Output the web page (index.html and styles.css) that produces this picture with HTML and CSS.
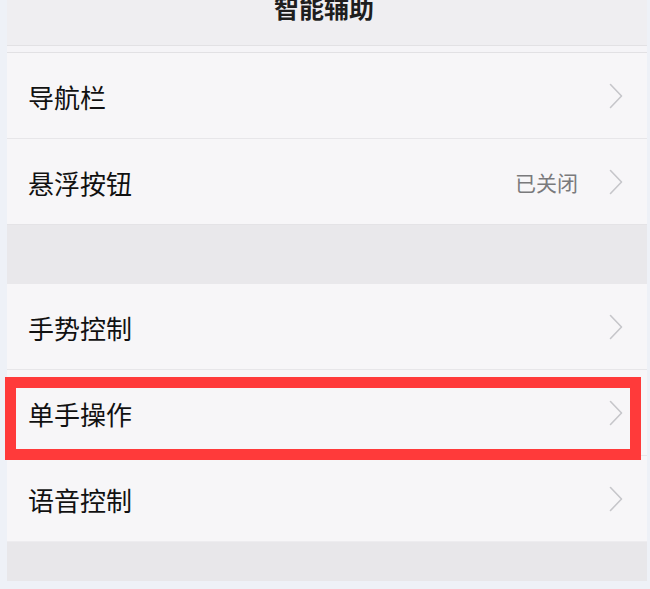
FILE: index.html
```html
<!DOCTYPE html>
<html lang="zh-CN">
<head>
<meta charset="utf-8">
<link rel="stylesheet" href="styles.css">
</head>
<body>
<div class="panel">
  <div class="header"><div class="title">智能辅助</div></div>
  <div class="strip"></div>
  <div class="group">
    <div class="row"><span class="label">导航栏</span><span class="right"><svg class="chev" viewBox="0 0 14 26"><polyline points="1.5,1.5 12.5,13 1.5,24.5"/></svg></span></div>
    <div class="row last"><span class="label">悬浮按钮</span><span class="right"><span class="value">已关闭</span><svg class="chev" viewBox="0 0 14 26"><polyline points="1.5,1.5 12.5,13 1.5,24.5"/></svg></span></div>
  </div>
  <div class="gap"></div>
  <div class="group">
    <div class="row"><span class="label">手势控制</span><span class="right"><svg class="chev" viewBox="0 0 14 26"><polyline points="1.5,1.5 12.5,13 1.5,24.5"/></svg></span></div>
    <div class="row highlighted"><span class="label">单手操作</span><span class="right"><svg class="chev" viewBox="0 0 14 26"><polyline points="1.5,1.5 12.5,13 1.5,24.5"/></svg></span><div class="mark"></div></div>
    <div class="row last"><span class="label">语音控制</span><span class="right"><svg class="chev" viewBox="0 0 14 26"><polyline points="1.5,1.5 12.5,13 1.5,24.5"/></svg></span></div>
  </div>
  <div class="footer"></div>
</div>
</body>
</html>
```

FILE: styles.css
```css
html, body {
  margin: 0;
  padding: 0;
}
body {
  background: #eef1f7;
  width: 650px;
  height: 589px;
  overflow: hidden;
  font-family: "Noto Sans CJK SC", "Noto Sans", sans-serif;
}
.panel {
  margin: 0 3px 0 7px;
  background: #f3f2f5;
}
.header {
  height: 45px;
  background: #efeef1;
  border-bottom: 1px solid #e2e1e4;
  overflow: hidden;
  display: flex;
  justify-content: center;
}
.title {
  margin-top: -11px;
  margin-right: 6px;
  font-size: 25px;
  line-height: 36px;
  font-weight: 700;
  color: #1e1e1e;
}
.strip {
  height: 6px;
  background: #f5f4f7;
  border-bottom: 1px solid #e2e1e4;
}
.group {
  background: #f7f6f8;
}
.row {
  position: relative;
  height: 85px;
  border-bottom: 1px solid #e7e6e9;
  display: flex;
  align-items: center;
  justify-content: space-between;
  padding: 0 24px 0 21px;
}
.row.last {
  border-bottom: none;
}
.label {
  font-size: 26px;
  color: #111;
  line-height: 1;
  margin-top: 3px;
}
.right {
  display: flex;
  align-items: center;
  gap: 31px;
}
.value {
  font-size: 21px;
  color: #7a7a7c;
  line-height: 1;
  margin-top: 2px;
}
.chev {
  width: 14px;
  height: 26px;
  display: block;
}
.chev polyline {
  fill: none;
  stroke: #c6c6ca;
  stroke-width: 1.6;
  stroke-linecap: round;
  stroke-linejoin: round;
}
.gap {
  height: 60px;
  background: #e9e8eb;
  border-top: 1px solid #e4e3e6;
  box-sizing: border-box;
}
.footer {
  height: 40px;
  background: #e8e7ea;
  border-top: 1px solid #edecef;
  box-sizing: border-box;
}
.mark {
  position: absolute;
  left: -2px;
  right: 6px;
  top: 7px;
  bottom: -5px;
  border: 11px solid #ff3a3a;
  pointer-events: none;
}
```
